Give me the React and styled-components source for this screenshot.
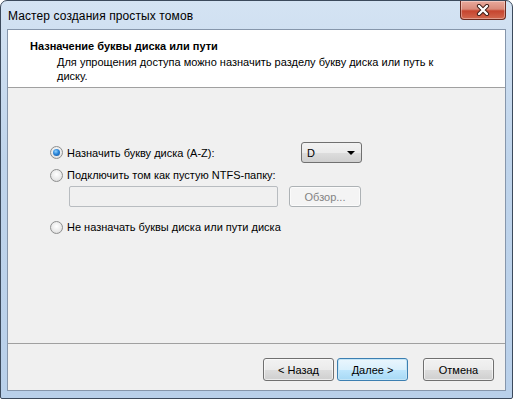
import React from "react";
import styled, { createGlobalStyle } from "styled-components";

const GlobalStyle = createGlobalStyle`
  html, body {
    margin: 0;
    padding: 0;
    background: #ffffff;
  }
  * {
    box-sizing: border-box;
  }
`;

const Window = styled.div`
  width: 513px;
  height: 399px;
  display: flex;
  flex-direction: column;
  border: 1px solid #3c4a5c;
  border-radius: 7px 7px 2px 2px;
  background: linear-gradient(to bottom, #d4e3f3 0%, #bfd4eb 40%, #b9d0ea 100%);
  padding: 0 6px 7px 6px;
  font-family: "Liberation Sans", Arial, sans-serif;
`;

const TitleBar = styled.div`
  height: 28px;
  display: flex;
  align-items: flex-start;
  padding-left: 1px;
`;

const Title = styled.div`
  font-size: 12px;
  color: #000;
  margin-top: 8px;
  letter-spacing: 0.1px;
`;

const CloseButton = styled.div`
  margin-left: auto;
  width: 46px;
  height: 19px;
  border: 1px solid #6b2a1f;
  border-top: none;
  border-radius: 0 0 4px 4px;
  background: linear-gradient(
    to bottom,
    #e9a99c 0%,
    #d98a7a 45%,
    #c6452f 55%,
    #d2684f 100%
  );
  box-shadow: inset 0 0 0 1px rgba(255, 255, 255, 0.35);
  display: flex;
  align-items: center;
  justify-content: center;
`;

const Client = styled.div`
  flex: 1;
  display: flex;
  flex-direction: column;
  border: 1px solid #8696ab;
  background: #f0f0f0;
`;

const Header = styled.div`
  height: 58px;
  background: #ffffff;
  border-bottom: 1px solid #a0a0a0;
  padding: 9px 0 0 22px;
`;

const HeaderTitle = styled.div`
  font-size: 11px;
  font-weight: bold;
  color: #000;
  line-height: 14px;
`;

const HeaderText = styled.div`
  font-size: 11px;
  color: #000;
  line-height: 14px;
  padding-left: 27px;
  width: 420px;
  margin-top: 2px;
`;

const Body = styled.div`
  flex: 1;
  padding: 54px 0 0 42px;
  display: flex;
  flex-direction: column;
  align-items: flex-start;
`;

const Row = styled.div`
  display: flex;
  align-items: center;
  width: ${(p) => p.width || "auto"};
  justify-content: ${(p) => (p.spread ? "space-between" : "flex-start")};
  margin-top: ${(p) => p.top || 0}px;
  padding-left: ${(p) => p.indent || 0}px;
  gap: ${(p) => p.gap || 0}px;
`;

const Option = styled.label`
  display: flex;
  align-items: center;
  height: 16px;
  font-size: 11px;
  color: #000;
`;

const Radio = styled.span`
  width: 13px;
  height: 13px;
  border-radius: 50%;
  border: 1px solid #8e8f8f;
  background: radial-gradient(circle at 50% 40%, #ffffff 0%, #e8e8e8 60%, #cfcfcf 100%);
  margin-right: 4px;
  display: flex;
  align-items: center;
  justify-content: center;
  &::after {
    content: "";
    width: 7px;
    height: 7px;
    border-radius: 50%;
    display: ${(p) => (p.checked ? "block" : "none")};
    background: radial-gradient(circle at 40% 35%, #8fd1ff 0%, #2a85d8 45%, #124f98 100%);
  }
`;

const Select = styled.div`
  width: 61px;
  height: 21px;
  border: 1px solid #707070;
  border-radius: 3px;
  background: linear-gradient(to bottom, #f2f2f2 0%, #ebebeb 50%, #dddddd 51%, #cfcfcf 100%);
  display: flex;
  align-items: center;
  padding: 0 6px 0 5px;
  font-size: 11px;
  color: #000;
`;

const Arrow = styled.span`
  margin-left: auto;
  width: 0;
  height: 0;
  border-left: 4px solid transparent;
  border-right: 4px solid transparent;
  border-top: 4px solid #000;
`;

const TextField = styled.div`
  width: 209px;
  height: 21px;
  border: 1px solid #b8bcc0;
  border-radius: 2px;
  background: #f0f0f0;
`;

const Button = styled.div`
  width: ${(p) => p.w || 71}px;
  height: ${(p) => p.h || 23}px;
  border: 1px solid ${(p) => (p.disabled ? "#adb2b5" : p.primary ? "#3c7fb1" : "#707070")};
  border-radius: 3px;
  background: ${(p) =>
    p.disabled
      ? "#f4f4f4"
      : p.primary
      ? "linear-gradient(to bottom, #eaf6fd 0%, #d9f0fc 50%, #bee6fd 51%, #a7d9f5 100%)"
      : "linear-gradient(to bottom, #f2f2f2 0%, #ebebeb 50%, #dddddd 51%, #cfcfcf 100%)"};
  box-shadow: ${(p) => (p.primary ? "inset 0 0 0 1px #c4e5f6" : "inset 0 0 0 1px rgba(255,255,255,0.6)")};
  display: flex;
  align-items: center;
  justify-content: center;
  font-size: 11px;
  color: ${(p) => (p.disabled ? "#838383" : "#000")};
`;

const Separator = styled.div`
  height: 1px;
  background: #a0a0a0;
`;

const Footer = styled.div`
  height: 46px;
  display: flex;
  justify-content: flex-end;
  align-items: flex-start;
  padding: 14px 11px 0 0;
`;

const Spacer = styled.div`
  width: ${(p) => p.w}px;
`;

const App = () => (
  <>
    <GlobalStyle />
    <Window>
      <TitleBar>
        <Title>Мастер создания простых томов</Title>
        <CloseButton>
          <svg width="14" height="12" viewBox="0 0 14 12">
            <path d="M3 2 L11 10 M11 2 L3 10" stroke="#3b1a14" strokeWidth="4.2" strokeLinecap="round" />
            <path d="M3 2 L11 10 M11 2 L3 10" stroke="#ffffff" strokeWidth="2.4" strokeLinecap="round" />
          </svg>
        </CloseButton>
      </TitleBar>
      <Client>
        <Header>
          <HeaderTitle>Назначение буквы диска или пути</HeaderTitle>
          <HeaderText>
            Для упрощения доступа можно назначить разделу букву диска или путь к диску.
          </HeaderText>
        </Header>
        <Body>
          <Row width="312px" spread>
            <Option>
              <Radio checked />
              Назначить букву диска (A-Z):
            </Option>
            <Select>
              D
              <Arrow />
            </Select>
          </Row>
          <Row top={4}>
            <Option>
              <Radio />
              Подключить том как пустую NTFS-папку:
            </Option>
          </Row>
          <Row top={3} indent={19} gap={11}>
            <TextField />
            <Button disabled w={72} h={21}>
              Обзор...
            </Button>
          </Row>
          <Row top={12}>
            <Option>
              <Radio />
              Не назначать буквы диска или пути диска
            </Option>
          </Row>
        </Body>
        <Separator />
        <Footer>
          <Button>&lt; Назад</Button>
          <Spacer w={3} />
          <Button primary>Далее &gt;</Button>
          <Spacer w={15} />
          <Button>Отмена</Button>
        </Footer>
      </Client>
    </Window>
  </>
);

export default App;
